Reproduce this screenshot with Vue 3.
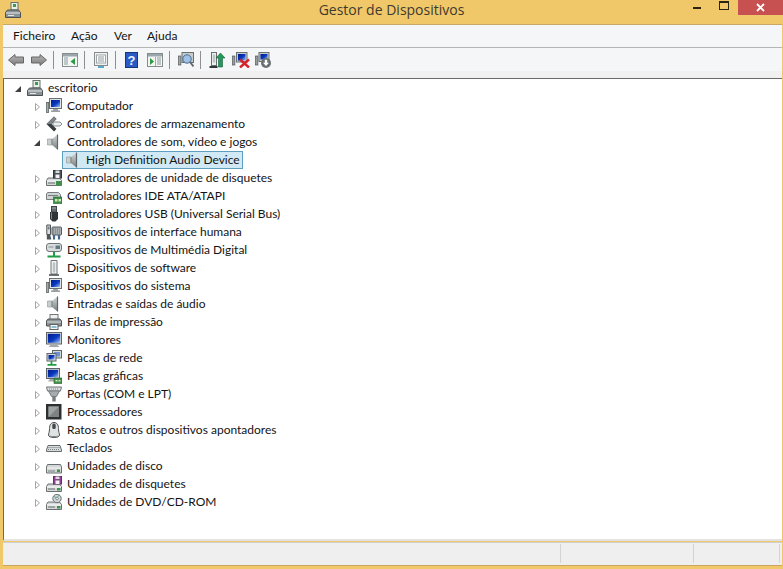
<script setup>
const menus = ['Ficheiro', 'Ação', 'Ver', 'Ajuda']
const tools = [
  'back', 'fwd', '|', 'panel', '|', 'props', '|', 'help', 'panel2', '|', 'scan', '|', 'update', 'remove', 'install'
]
const rows = [
  { t: 'Computador', i: 'computer' },
  { t: 'Controladores de armazenamento', i: 'storage' },
  { t: 'Controladores de som, vídeo e jogos', i: 'speaker', open: true },
  { t: 'High Definition Audio Device', i: 'speaker', child: true },
  { t: 'Controladores de unidade de disquetes', i: 'floppy' },
  { t: 'Controladores IDE ATA/ATAPI', i: 'ide' },
  { t: 'Controladores USB (Universal Serial Bus)', i: 'usb' },
  { t: 'Dispositivos de interface humana', i: 'hid' },
  { t: 'Dispositivos de Multimédia Digital', i: 'media' },
  { t: 'Dispositivos de software', i: 'software' },
  { t: 'Dispositivos do sistema', i: 'computer' },
  { t: 'Entradas e saídas de áudio', i: 'speaker' },
  { t: 'Filas de impressão', i: 'printer' },
  { t: 'Monitores', i: 'monitor' },
  { t: 'Placas de rede', i: 'network' },
  { t: 'Placas gráficas', i: 'graphics' },
  { t: 'Portas (COM e LPT)', i: 'ports' },
  { t: 'Processadores', i: 'cpu' },
  { t: 'Ratos e outros dispositivos apontadores', i: 'mouse' },
  { t: 'Teclados', i: 'keyboard' },
  { t: 'Unidades de disco', i: 'disk' },
  { t: 'Unidades de disquetes', i: 'floppy2' },
  { t: 'Unidades de DVD/CD-ROM', i: 'dvd' }
]
</script>

<template>
  <div class="window">
    <svg class="defs" aria-hidden="true">
      <defs>
        <linearGradient id="scr" x1="0" y1="0" x2="1" y2="1"><stop offset="0" stop-color="#001a8c"/><stop offset=".55" stop-color="#0a3bc0"/><stop offset="1" stop-color="#9fc3f5"/></linearGradient>
        <linearGradient id="grey" x1="0" y1="0" x2="0" y2="1"><stop offset="0" stop-color="#d6d9d9"/><stop offset="1" stop-color="#777d7d"/></linearGradient>
        <linearGradient id="arrow" x1="0" y1="0" x2="0" y2="1"><stop offset="0" stop-color="#b8b8b8"/><stop offset="1" stop-color="#7a7a7a"/></linearGradient>

        <symbol id="back" viewBox="0 0 16 16"><path d="M.5 8 7 2.500V5h8.500v6H7v2.500z" fill="url(#arrow)" stroke="#666"/></symbol>
        <symbol id="fwd" viewBox="0 0 16 16"><path d="M15.500 8 9 2.500V5H.5v6H9v2.500z" fill="url(#arrow)" stroke="#666"/></symbol>
        <symbol id="panel" viewBox="0 0 16 16"><rect x=".5" y="1.500" width="15" height="13" fill="#f4f6f6" stroke="#868b8b"/><rect x="1" y="2" width="14" height="2.500" fill="#9aa6ad"/><path d="M2 6h4M2 8h4M2 10h4M2 12h4" stroke="#8a9a9a"/><path d="M13 6v7L8.500 9.500z" fill="#2f9a45"/></symbol>
        <symbol id="panel2" viewBox="0 0 16 16"><rect x=".5" y="1.500" width="15" height="13" fill="#f4f6f6" stroke="#868b8b"/><rect x="1" y="2" width="14" height="2.500" fill="#9aa6ad"/><path d="M10 6h4M10 8h4M10 10h4M10 12h4" stroke="#8a9a9a"/><path d="M3 6v7l4-3.500z" fill="#2f9a45"/><path d="M8.500 5v9" stroke="#a0a8b0"/></symbol>
        <symbol id="props" viewBox="0 0 16 16"><rect x="1.500" y=".5" width="13" height="13" fill="#eef1f2" stroke="#868b8d"/><rect x="3.500" y="3" width="9" height="8" fill="#fff" stroke="#a0a6a8"/><path d="M5 5h6M5 7h6M5 9h6" stroke="#8e979a"/><rect x="5" y="14" width="6" height="2" fill="#58a9c8"/></symbol>
        <symbol id="help" viewBox="0 0 16 16"><rect x="1.500" y=".5" width="12" height="15" fill="#2a5ac4" stroke="#16367c"/><text x="7.500" y="13" font-size="13" font-weight="700" font-family="Liberation Sans" fill="#eef3ff" text-anchor="middle">?</text></symbol>
        <symbol id="computer" viewBox="0 0 16 16"><rect x=".3" y="4.500" width="2.400" height="10" fill="#a4abae" stroke="#4f5557" stroke-width=".7"/><rect x="3.500" y=".5" width="12" height="10" fill="#dfe3e4" stroke="#6a7072"/><rect x="5" y="2" width="9" height="7" fill="url(#scr)"/><path d="M7.500 11h4l1 1.500h1.500v1.500H5v-1.500h1.500z" fill="#9aa0a2"/></symbol>
        <symbol id="monitor" viewBox="0 0 16 16"><rect x=".5" y=".5" width="15" height="11.500" fill="#d4d8d9" stroke="#5f6567"/><rect x="1.800" y="1.800" width="12.400" height="9" fill="url(#scr)"/><path d="M5 12.500h6l2.500 2.500h-11z" fill="#a3a9ab"/></symbol>
        <symbol id="graphics" viewBox="0 0 16 16"><rect x=".5" y=".5" width="13" height="10" fill="#d4d8d9" stroke="#5f6567"/><rect x="1.800" y="1.800" width="10.400" height="7.500" fill="url(#scr)"/><path d="M4 11h6l2 2.500H2z" fill="#a3a9ab"/><rect x="8" y="10" width="8" height="5.500" fill="#3f9049" stroke="#255f2e" stroke-width=".6"/><path d="M9.500 12h2v1.500h-2zM12.500 12h2v1.500h-2z" fill="#d5e8b5"/></symbol>
        <symbol id="storage" viewBox="0 0 16 16"><path d="M8 .5.500 8 8 15.500l2.500-2.500L5.500 8l5-5z" fill="#363b3e"/><path d="M8 .5.500 8h5l5-5z" fill="#7f868a"/><path d="M7 6h7l2 2-2 2H7z" fill="#eceff0" stroke="#5b6164" stroke-width=".7"/></symbol>
        <symbol id="speaker" viewBox="0 0 16 16"><path d="M1.500 5h4.500v6H1.500z" fill="#c8cdcd" stroke="#9aa0a0" stroke-width=".7"/><path d="M6 5 11.500.5v15L6 11z" fill="url(#grey)"/><path d="M11.500.5v15" stroke="#5f6565" stroke-width="1.200"/><path d="M6 5v6" stroke="#7d8383"/></symbol>
        <g id="drive"><path d="M2 8h11.500l2 2.500v5H.5v-5z" fill="#d4d8d9" stroke="#6a7072"/><path d="M1 11h14" stroke="#fff"/><path d="M2 13h7" stroke="#676d6f"/></g>
        <symbol id="floppy" viewBox="0 0 16 16"><use href="#drive"/><rect x="7.500" y=".5" width="8" height="7.500" fill="#4c535b" stroke="#30353a"/><rect x="9.500" y=".5" width="4" height="2.500" fill="#d9dcde"/><rect x="9.500" y="4.500" width="4" height="3.500" fill="#f1f1f1"/><rect x="10" y="11" width="5.500" height="4.500" fill="#3f9049"/></symbol>
        <symbol id="floppy2" viewBox="0 0 16 16"><use href="#drive"/><rect x="7.500" y=".5" width="8" height="7.500" fill="#8c4590" stroke="#652c6a"/><rect x="9.500" y=".5" width="4" height="2.500" fill="#e0d3e2"/><rect x="9.500" y="4.500" width="4" height="3.500" fill="#f1f1f1"/><rect x="11" y="12" width="3.500" height="2.500" fill="#3f9049"/></symbol>
        <symbol id="ide" viewBox="0 0 16 16"><path d="M1.500 4.500h11l2 2v5H.5V6z" fill="#cfd3d4" stroke="#787e80"/><path d="M2 7.500h10" stroke="#787e80"/><rect x="7.500" y="9" width="8.500" height="6.500" fill="#3f9049" stroke="#255f2e" stroke-width=".6"/><path d="M9 11h2.500v2.500H9zM12.500 11H15v2.500h-2.500z" fill="#d5e8b5"/></symbol>
        <symbol id="disk" viewBox="0 0 16 16"><path d="M1.500 6.500h13l1 2.500v6H.5V9z" fill="#d4d8d9" stroke="#6a7072"/><path d="M1 10h14" stroke="#f7f7f7"/><path d="M2 13h7" stroke="#767c7e"/><rect x="11" y="11.500" width="3" height="2.500" fill="#3f9049"/></symbol>
        <symbol id="dvd" viewBox="0 0 16 16"><use href="#drive"/><circle cx="11" cy="4.500" r="4.200" fill="#cfd6d8" stroke="#6a7173"/><circle cx="11" cy="4.500" r="1.300" fill="#fff" stroke="#5e6567" stroke-width=".7"/><path d="M8 2.500 11 4l2-3.200" stroke="#6ea794" fill="none"/><rect x="11" y="12" width="3.500" height="2.500" fill="#3f9049"/></symbol>
        <symbol id="usb" viewBox="0 0 16 16"><rect x="5.500" y=".5" width="5" height="5.500" fill="#666c70" stroke="#3e4448"/><path d="M6.500 2h1M8.500 2h1" stroke="#e6e9ea"/><path d="M4 6h8v7l-2.500 2.500h-3L4 13z" fill="#2f3438"/><path d="M5.500 6.500v6.500" stroke="#7d8386"/></symbol>
        <symbol id="hid" viewBox="0 0 16 16"><path d="M.8 1h3.700v9.500H.8z" fill="#dcdfe0" stroke="#4d5356"/><rect x="1.800" y="2.500" width="1.700" height="3" fill="#767c7f"/><path d="M.8 11h3.500l1 4.500H.8z" fill="#4f5659"/><rect x="6" y="3" width="9.500" height="8" rx="1" fill="#a9aeb0" stroke="#555b5e"/><path d="M7 5h8M7 7h8M7 9h8" stroke="#6e7477" stroke-dasharray="1 1"/><path d="M8 11v4.500M13 11v4.500" stroke="#46668c" stroke-width="2.200"/></symbol>
        <symbol id="media" viewBox="0 0 16 16"><rect x=".5" y="1.500" width="15" height="8" rx="2.500" fill="#d8dcdc" stroke="#70767a"/><rect x="9.500" y="3.500" width="4.500" height="3.500" fill="#5f7a82"/><path d="M2.500 5h5" stroke="#868c8e"/><path d="M8 10v3.500M1.500 14.500h13" stroke="#1f9d45" stroke-width="2"/></symbol>
        <symbol id="software" viewBox="0 0 16 16"><path d="M5 .5h6v13.500H5z" fill="#f2f3f3" stroke="#6f7577"/><rect x="6.800" y="2.500" width="2.400" height="10" fill="#bcc2c3"/><path d="M3 15h10" stroke="#4a5052" stroke-width="1.600"/></symbol>
        <symbol id="printer" viewBox="0 0 16 16"><rect x="4" y=".5" width="8" height="5" fill="#eef0f0" stroke="#70767a"/><path d="M2 5h12l1.500 2v5H.5V7z" fill="#8e9496" stroke="#4d5254"/><path d="M1 8h14" stroke="#d6dbdc"/><rect x="4" y="10.500" width="8" height="5" fill="#f8f8f8" stroke="#5d6365"/><path d="M5.500 13h5" stroke="#1f84ad"/></symbol>
        <symbol id="network" viewBox="0 0 16 16"><rect x="6.500" y=".5" width="9" height="7.500" fill="#d4d8d9" stroke="#5f6567"/><rect x="8" y="2" width="6" height="4.500" fill="#6f92d4"/><rect x="1" y="3.500" width="9" height="7.500" fill="#d4d8d9" stroke="#5f6567"/><rect x="2.500" y="5" width="6" height="4.500" fill="url(#scr)"/><path d="M5.500 11v3M1.500 14.800h9" stroke="#1f9d45" stroke-width="1.800"/></symbol>
        <symbol id="ports" viewBox="0 0 16 16"><path d="M.5 1h15l-1 4H1.500z" fill="#dcdfe0" stroke="#6f7577"/><path d="M2.500 5h11l-3 5.500h-5z" fill="#a7abad" stroke="#787e80"/><path d="M6.300 10.500h3.400v5H6.300z" fill="#767c7e"/><path d="M3 3h10" stroke="#7f8587" stroke-dasharray="1 1"/></symbol>
        <symbol id="cpu" viewBox="0 0 16 16"><rect x="0" y="0" width="15.500" height="15.500" fill="#2d3031"/><rect x="2.500" y="2.500" width="10.500" height="10.500" fill="#808384"/><path d="M2.500 2.500H13L2.500 13z" fill="#a0a3a4"/><path d="M15.500 2v12M1 15.500h14" stroke="#c59a27" stroke-dasharray="1 1"/></symbol>
        <symbol id="mouse" viewBox="0 0 16 16"><path d="M8 .5c3 0 4.500 2.500 4.500 6 0 4 1 5 1 6.500s-2 2.500-5.500 2.500-5.500-1-5.500-2.500 1-2.500 1-6.500c0-3.500 1.500-6 4.500-6z" fill="#dfe2e3" stroke="#4d5355"/><rect x="6.300" y="1.500" width="3.400" height="5.500" rx="1.500" fill="#43494b"/><path d="M4 14c2 1 6 1 8 0" stroke="#90969a"/></symbol>
        <symbol id="keyboard" viewBox="0 0 16 16"><path d="M2 5.500h12l1.500 4.500v1.500H.5V10z" fill="#d8dbdc" stroke="#666c6e"/><path d="M2.500 7.500h11M2 9.500h12" stroke="#767c7e" stroke-dasharray="1 1"/></symbol>
        <symbol id="host" viewBox="0 0 16 16"><rect x="6" y=".5" width="7" height="7.500" fill="#e7efe6" stroke="#66726c"/><rect x="8" y="2" width="3" height="3" fill="#3c9a50"/><path d="M2.500 8h11l2 2.500v5H.5v-5z" fill="#8a9194" stroke="#4a5053"/><path d="M1 11h14" stroke="#e9ecec"/><path d="M3 13.500h6" stroke="#e3e6e7"/></symbol>
        <symbol id="scan" viewBox="0 0 16 16"><rect x=".3" y="4" width="2.600" height="9" fill="#a2a8aa" stroke="#55595b" stroke-width=".7"/><rect x="4" y=".5" width="11.500" height="10" fill="#c4cbcd" stroke="#6a7072"/><circle cx="9" cy="7" r="4.200" fill="#9ec1e6" stroke="#4a6c92"/><path d="m12 10 3.500 4.500" stroke="#656b6d" stroke-width="2"/></symbol>
        <symbol id="update" viewBox="0 0 16 16"><rect x="2.500" y=".5" width="5" height="13" fill="#eef0f0" stroke="#6a7072"/><rect x="3.800" y="2.500" width="2.400" height="8" fill="#bcc2c3"/><path d="M.5 15h8" stroke="#33383a" stroke-width="2"/><path d="M11.500 1 16 6h-2.500v9h-4V6H7z" fill="#24975a" stroke="#195f3a" stroke-width=".6"/></symbol>
        <symbol id="remove" viewBox="0 0 18 16"><rect x=".3" y="4" width="2.600" height="9" fill="#969d9f" stroke="#55595b" stroke-width=".7"/><rect x="4.500" y=".5" width="10.500" height="9.500" fill="#c4cbcd" stroke="#6a7072"/><rect x="6" y="2" width="7.500" height="6.500" fill="url(#scr)"/><path d="m8 7.500 9 8M17 7.500l-9 8" stroke="#d6222a" stroke-width="2.400"/></symbol>
        <symbol id="install" viewBox="0 0 16 16"><rect x=".3" y="4" width="2.600" height="9" fill="#969d9f" stroke="#55595b" stroke-width=".7"/><rect x="4" y=".5" width="10" height="9" fill="#c4cbcd" stroke="#6a7072"/><rect x="5.500" y="2" width="7" height="5.500" fill="url(#scr)"/><circle cx="11" cy="11" r="5" fill="#696f72"/><path d="M9.800 7.800h2.400v3h1.800L11 14l-3-3.200h1.800z" fill="#fff"/></symbol>
      </defs>
    </svg>

    <header class="titlebar">
      <svg class="title-icon"><use href="#host"/></svg>
      <h1 class="title">Gestor de Dispositivos</h1>
      <div class="controls">
        <span class="min"></span>
        <span class="max"></span>
        <span class="close">
          <svg width="9" height="9" viewBox="0 0 9 9"><path d="m1 1 7 7M8 1 1 8" stroke="#fff" stroke-width="1.800"/></svg>
        </span>
      </div>
    </header>

    <nav class="menubar">
      <span v-for="m in menus" :key="m" class="menu">{{ m }}</span>
    </nav>

    <div class="toolbar">
      <template v-for="(t, n) in tools" :key="n">
        <span v-if="t === '|'" class="sep"></span>
        <svg v-else :class="['tool', { wide: t === 'remove' }]"><use :href="'#' + t"/></svg>
      </template>
    </div>
    <div class="strip"></div>

    <main class="tree">
      <div class="row root">
        <svg class="exp" viewBox="0 0 8 8"><path d="M7 1v6H1z" fill="#404040"/></svg>
        <svg class="icon"><use href="#host"/></svg>
        <span class="label">escritorio</span>
      </div>
      <div v-for="r in rows" :key="r.t" :class="['row', { child: r.child }]">
        <template v-if="r.child">
          <div class="selected">
            <svg class="icon"><use :href="'#' + r.i"/></svg>
            <span class="label">{{ r.t }}</span>
          </div>
        </template>
        <template v-else>
          <svg v-if="r.open" class="exp" viewBox="0 0 8 8"><path d="M7 1v6H1z" fill="#404040"/></svg>
          <svg v-else class="exp" viewBox="0 0 8 8"><path d="M2.500.5 6.500 4l-4 3.500z" fill="#fff" stroke="#a6a6a6"/></svg>
          <svg class="icon"><use :href="'#' + r.i"/></svg>
          <span class="label">{{ r.t }}</span>
        </template>
      </div>
    </main>

    <footer class="status">
      <div class="cell main"></div>
      <div class="cell mid"></div>
      <div class="cell end"></div>
    </footer>
  </div>
</template>

<style>
html, body { margin: 0; padding: 0; background: #f0c869; overflow: hidden; }
</style>

<style scoped>
.window {
  width: 783px;
  height: 569px;
  display: flex;
  flex-direction: column;
  background: #f0c869;
  font-family: Lato, Roboto, sans-serif;
  font-size: 12px;
  color: #141414;
  overflow: hidden;
}
.defs { width: 0; height: 0; position: absolute; }
.titlebar {
  height: 24px;
  flex: none;
  display: grid;
  grid-template-columns: 1fr auto 1fr;
  align-items: start;
}
.title-icon { width: 16px; height: 16px; margin: 2px 0 0 5px; }
.title {
  margin: 0;
  font-family: "Open Sans", sans-serif;
  font-size: 14px;
  font-weight: 400;
  line-height: 20px;
  color: #3f3a2e;
}
.controls { display: flex; justify-content: flex-end; align-items: flex-start; }
.min { width: 8px; height: 2px; background: #2b2410; margin: 7px 18px 0 0; }
.max { width: 8px; height: 6px; border: 1px solid #2b2410; border-top-width: 2px; margin: 1px 9px 0 0; }
.close {
  width: 45px;
  height: 15px;
  background: #c75050;
  display: flex;
  align-items: center;
  justify-content: center;
}
.menubar {
  height: 23px;
  flex: none;
  margin: 1px 1px 0 3px;
  box-shadow: 0 -1px 0 #c9a865;
  background: #f5f6f7;
  border-bottom: 1px solid #b5b5b5;
  box-sizing: border-box;
  display: flex;
  align-items: center;
  padding-left: 10px;
}
.menu { line-height: 22px; }
.menu:nth-child(1) { width: 58px; }
.menu:nth-child(2) { width: 43px; }
.menu:nth-child(3) { width: 33px; }
.toolbar {
  height: 23px;
  flex: none;
  margin: 0 1px 0 3px;
  background: #f5f6f7;
  display: flex;
  align-items: center;
  padding-left: 5px;
}
.tool { width: 16px; height: 16px; margin-right: 7px; flex: none; }
.tool.wide { width: 18px; margin-right: 5px; }
.sep { width: 1px; height: 18px; background: #8f8f8f; margin: 0 8px 0 -1px; flex: none; }
.strip { height: 7px; flex: none; margin: 0 1px 0 3px; background: #f0f0f0; }
.tree {
  flex: 1;
  min-height: 0;
  margin: 0 1px 0 3px;
  background: #fff;
  border-top: 1px solid #696969;
  border-left: 1px solid #696969;
  border-bottom: 2px solid #e3e3e3;
}
.row {
  height: 18px;
  display: flex;
  align-items: center;
  padding-left: 29px;
}
.exp { width: 8px; height: 8px; flex: none; margin-right: 5px; margin-top: 2px; }
.icon { width: 16px; height: 16px; flex: none; margin-right: 5px; }
.label { white-space: nowrap; line-height: 18px; }
.root { padding-left: 10px; }
.child { padding-left: 58px; }
.selected {
  width: 181px;
  height: 18px;
  box-sizing: border-box;
  display: flex;
  align-items: center;
  padding-left: 2px;
  background: #d1e8f5;
  border: 1px solid #5f9fbe;
}
.status {
  height: 21px;
  flex: none;
  margin: 1px 1px 3px 3px;
  background: #efefef;
  border-top: 1px solid #d0d0d0;
  border-bottom: 1px solid #c9a560;
  display: flex;
  padding-top: 1px;
}
.cell { height: 19px; border-right: 1px solid #d4d4d4; box-sizing: border-box; }
.main { width: 558px; }
.mid { width: 133px; }
.end { width: 86px; }
</style>
